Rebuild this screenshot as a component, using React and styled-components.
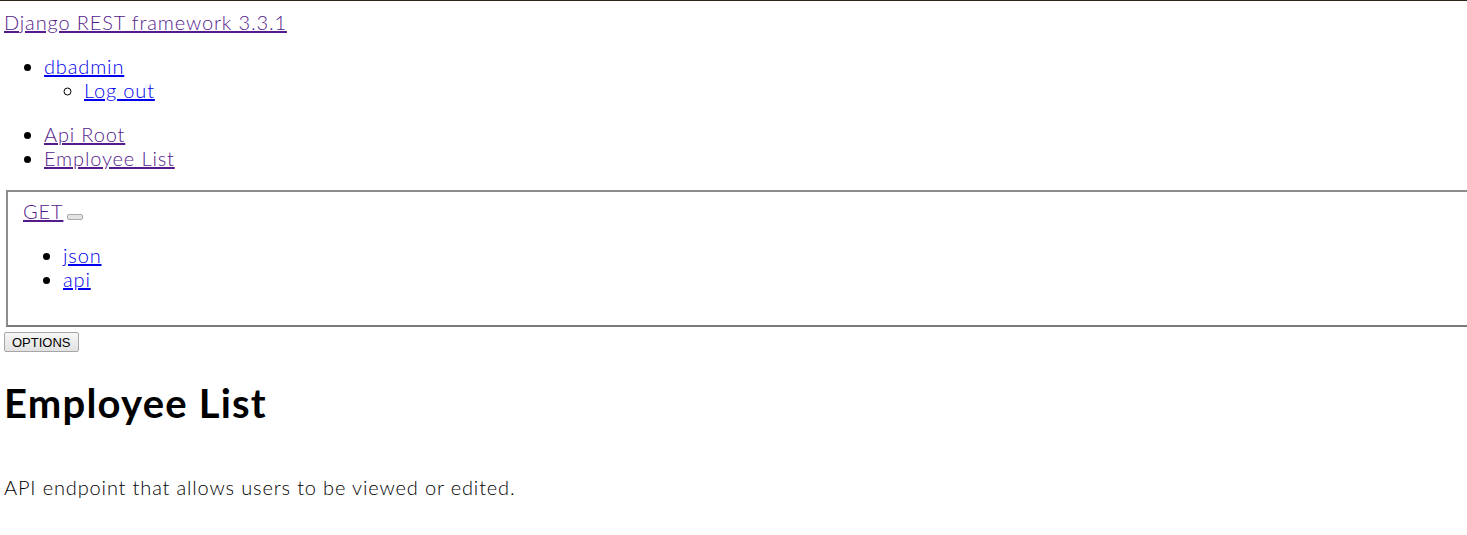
import React from 'react'
import styled, { createGlobalStyle } from 'styled-components'

const GlobalStyle = createGlobalStyle`
  html{
    overflow-x:hidden;
  }
  body{
    margin:0;
    padding:9px 4px 0;
    border-top:1px solid #2b2218;
    font-family:Lato, "Open Sans", sans-serif;
    font-size:20px;
    font-weight:300;
    line-height:24px;
    letter-spacing:0.85px;
    color:#000;
    background:#fff;
  }
`

const Link = styled.a`
  color:${p => (p.$visited ? '#551a8b' : '#0000ee')};
  text-decoration:underline;
  cursor:pointer;
`

const Brand = styled.div`
  height:24px;
`

const List = styled.ul`
  margin:20px 0;
  padding-left:40px;
  list-style:disc;
`

const SubList = styled.ul`
  margin:0;
  padding-left:40px;
  list-style:circle;
`

const RequestForm = styled.fieldset`
  margin:0 0 0 2px;
  width:1500px;
  padding:7px 15px 14px;
  border:2px solid;
  border-color:#8c8c8c #7a7a7a #7a7a7a #8c8c8c;
`

const MethodRow = styled.div`
  display:flex;
  align-items:flex-end;
  gap:4px;
  height:24px;
`

const ToggleButton = styled.button`
  width:16px;
  height:6px;
  padding:0;
  margin-bottom:3px;
  border:1px solid #a9a9a9;
  border-radius:2px;
  background:#e3e3e3;
`

const OptionsButton = styled.button`
  display:block;
  margin-top:5px;
  height:20px;
  padding:0 7px;
  font-family:"Liberation Sans", Arial, sans-serif;
  font-size:13px;
  font-weight:400;
  letter-spacing:0;
  color:#000;
  border:1px solid #a6a6a6;
  border-radius:2px;
  background:linear-gradient(#f6f6f6, #e2e2e2);
`

const Title = styled.h1`
  margin:27px 0 48px;
  font-size:40px;
  line-height:48px;
  font-weight:700;
  letter-spacing:1.2px;
`

const Description = styled.p`
  margin:20px 0;
`

function App() {
  return (
    <>
      <GlobalStyle />
      <Brand>
        <Link $visited href="#">Django REST framework 3.3.1</Link>
      </Brand>
      <List>
        <li>
          <Link href="#">dbadmin </Link>
          <SubList>
            <li><Link href="#">Log out</Link></li>
          </SubList>
        </li>
      </List>
      <List>
        <li><Link $visited href="#">Api Root</Link></li>
        <li><Link $visited href="#">Employee List</Link></li>
      </List>
      <RequestForm>
        <MethodRow>
          <Link $visited href="#">GET</Link>
          <ToggleButton type="button" />
        </MethodRow>
        <List>
          <li><Link href="#">json</Link></li>
          <li><Link href="#">api</Link></li>
        </List>
      </RequestForm>
      <OptionsButton type="button">OPTIONS</OptionsButton>
      <Title>Employee List</Title>
      <Description>API endpoint that allows users to be viewed or edited.</Description>
    </>
  )
}

export default App
